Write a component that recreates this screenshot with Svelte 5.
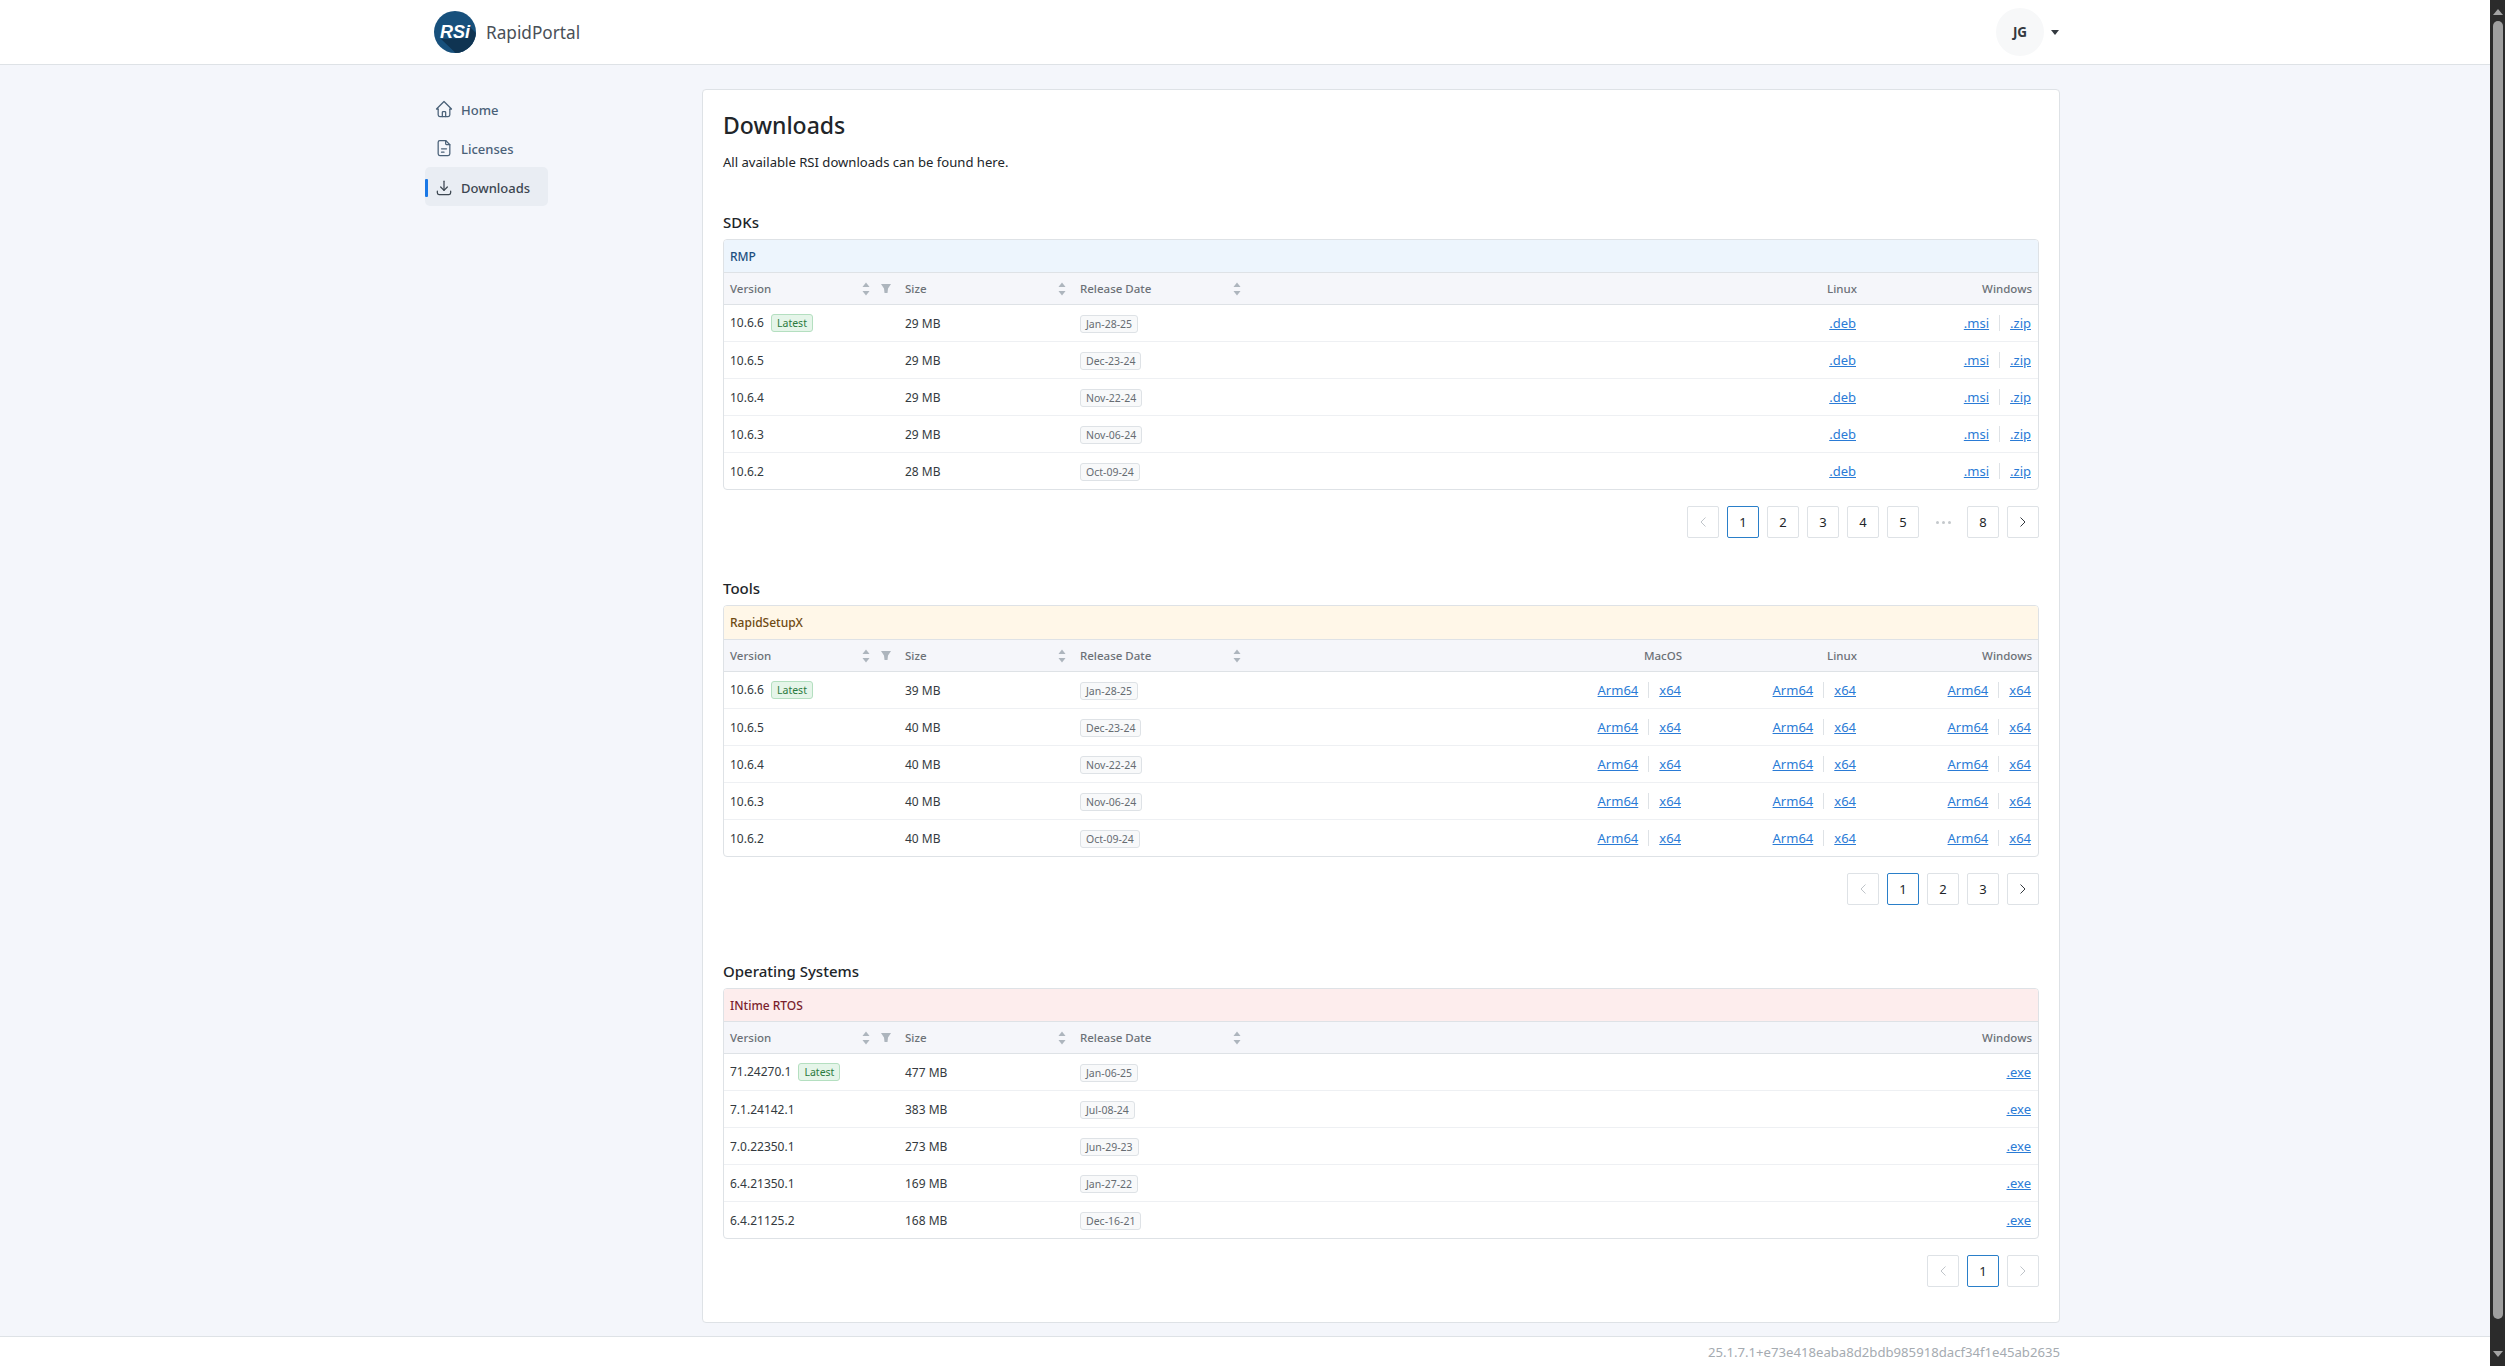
<script lang="ts">
	type Row = { version: string; size: string; date: string; latest?: boolean };
	type Section = {
		title: string;
		band: string;
		tone: string;
		platforms: string[];
		rows: Row[];
		pages: (number | string)[];
		lastDisabled?: boolean;
	};

	const sections: Section[] = [
		{
			title: 'SDKs',
			band: 'RMP',
			tone: 'blue',
			platforms: ['Linux', 'Windows'],
			rows: [
				{ version: '10.6.6', size: '29 MB', date: 'Jan-28-25', latest: true },
				{ version: '10.6.5', size: '29 MB', date: 'Dec-23-24' },
				{ version: '10.6.4', size: '29 MB', date: 'Nov-22-24' },
				{ version: '10.6.3', size: '29 MB', date: 'Nov-06-24' },
				{ version: '10.6.2', size: '28 MB', date: 'Oct-09-24' }
			],
			pages: [1, 2, 3, 4, 5, '...', 8]
		},
		{
			title: 'Tools',
			band: 'RapidSetupX',
			tone: 'yellow',
			platforms: ['MacOS', 'Linux', 'Windows'],
			rows: [
				{ version: '10.6.6', size: '39 MB', date: 'Jan-28-25', latest: true },
				{ version: '10.6.5', size: '40 MB', date: 'Dec-23-24' },
				{ version: '10.6.4', size: '40 MB', date: 'Nov-22-24' },
				{ version: '10.6.3', size: '40 MB', date: 'Nov-06-24' },
				{ version: '10.6.2', size: '40 MB', date: 'Oct-09-24' }
			],
			pages: [1, 2, 3]
		},
		{
			title: 'Operating Systems',
			band: 'INtime RTOS',
			tone: 'red',
			platforms: ['Windows'],
			rows: [
				{ version: '71.24270.1', size: '477 MB', date: 'Jan-06-25', latest: true },
				{ version: '7.1.24142.1', size: '383 MB', date: 'Jul-08-24' },
				{ version: '7.0.22350.1', size: '273 MB', date: 'Jun-29-23' },
				{ version: '6.4.21350.1', size: '169 MB', date: 'Jan-27-22' },
				{ version: '6.4.21125.2', size: '168 MB', date: 'Dec-16-21' }
			],
			pages: [1],
			lastDisabled: true
		}
	];

	function linksFor(section: Section, platform: string): string[] {
		if (section.tone === 'blue') return platform === 'Linux' ? ['.deb'] : ['.msi', '.zip'];
		if (section.tone === 'yellow') return ['Arm64', 'x64'];
		return ['.exe'];
	}
</script>

{#snippet sortIcon()}
	<svg class="sort" viewBox="0 0 8 14" width="8" height="14" aria-hidden="true">
		<path d="M4 0.5 L7.5 5 H0.5 Z" />
		<path d="M4 13.5 L7.5 9 H0.5 Z" />
	</svg>
{/snippet}

<div class="window">
	<div class="page">
		<header class="topbar">
			<div class="brand">
				<svg class="logo" viewBox="0 0 42 42" width="42" height="42" aria-hidden="true">
					<defs>
						<clipPath id="logo-clip"><circle cx="21" cy="21" r="21" /></clipPath>
					</defs>
					<circle cx="21" cy="21" r="21" fill="#17507c" />
					<path clip-path="url(#logo-clip)" d="M7 28 L34 27 L36 16 L50 30 L30 50 Z" fill="#0f3452" />
					<text x="21" y="27" text-anchor="middle" class="logo-text">RSi</text>
				</svg>
				<span class="brand-name">RapidPortal</span>
			</div>
			<div class="user">
				<span class="avatar">JG</span>
				<svg class="caret" viewBox="0 0 8 5" width="8" height="5" aria-hidden="true"><path d="M0 0 H8 L4 5 Z" /></svg>
			</div>
		</header>

		<div class="body">
			<nav class="sidebar">
				<a class="nav-item" href="#top">
					<svg class="nav-icon" viewBox="0 0 24 24" aria-hidden="true">
						<path d="M5 12H3l9-9 9 9h-2" />
						<path d="M5 12v7a2 2 0 0 0 2 2h10a2 2 0 0 0 2-2v-7" />
						<path d="M10 21v-5a1 1 0 0 1 1-1h2a1 1 0 0 1 1 1v5" />
					</svg>
					Home
				</a>
				<a class="nav-item" href="#top">
					<svg class="nav-icon" viewBox="0 0 24 24" aria-hidden="true">
						<path d="M14 3v4a1 1 0 0 0 1 1h4" />
						<path d="M17 21H7a2 2 0 0 1-2-2V5a2 2 0 0 1 2-2h7l5 5v11a2 2 0 0 1-2 2z" />
						<path d="M9 13h6" />
						<path d="M9 17h3" />
					</svg>
					Licenses
				</a>
				<a class="nav-item active" href="#top">
					<svg class="nav-icon" viewBox="0 0 24 24" aria-hidden="true">
						<path d="M4 17v2a2 2 0 0 0 2 2h12a2 2 0 0 0 2-2v-2" />
						<path d="M8 12l4 4 4-4" />
						<path d="M12 5v11" />
					</svg>
					Downloads
				</a>
			</nav>

			<main class="card">
				<h1>Downloads</h1>
				<p class="lead">All available RSI downloads can be found here.</p>

				{#each sections as section}
					<section class={section.tone}>
						<h2>{section.title}</h2>
						<div class="box">
							<div class="band">{section.band}</div>
							<table>
								<thead>
									<tr>
										<th>
											<div class="th-inner">
												<span>Version</span>
												<span class="th-icons">
													{@render sortIcon()}
													<svg class="filter" viewBox="0 0 10 9" width="10" height="9" aria-hidden="true">
														<path d="M0 0 H10 L7 4.5 L6.5 9 H3.5 L3 4.5 Z" />
													</svg>
												</span>
											</div>
										</th>
										<th>
											<div class="th-inner">
												<span>Size</span>
												{@render sortIcon()}
											</div>
										</th>
										<th>
											<div class="th-inner">
												<span>Release Date</span>
												{@render sortIcon()}
											</div>
										</th>
										<th class="spacer"></th>
										{#each section.platforms as platform}
											<th class="right">{platform}</th>
										{/each}
									</tr>
								</thead>
								<tbody>
									{#each section.rows as row}
										<tr>
											<td>
												{row.version}
												{#if row.latest}
													<span class="badge latest">Latest</span>
												{/if}
											</td>
											<td>{row.size}</td>
											<td><span class="badge date">{row.date}</span></td>
											<td class="spacer"></td>
											{#each section.platforms as platform}
												<td class="right">
													<div class="links">
														{#each linksFor(section, platform) as link, i}
															{#if i > 0}<span class="divider"></span>{/if}
															<a href="#top">{link}</a>
														{/each}
													</div>
												</td>
											{/each}
										</tr>
									{/each}
								</tbody>
							</table>
						</div>

						<div class="pager">
							<button class="page-btn" disabled aria-label="Previous">
								<svg viewBox="0 0 8 12" width="8" height="12"><path d="M6.5 1.5 L2 6 L6.5 10.5" /></svg>
							</button>
							{#each section.pages as page}
								{#if page === '...'}
									<span class="dots"><i></i><i></i><i></i></span>
								{:else}
									<button class="page-btn" class:current={page === 1}>{page}</button>
								{/if}
							{/each}
							<button class="page-btn" disabled={section.lastDisabled} aria-label="Next">
								<svg viewBox="0 0 8 12" width="8" height="12"><path d="M1.5 1.5 L6 6 L1.5 10.5" /></svg>
							</button>
						</div>
					</section>
				{/each}
			</main>
		</div>

		<footer class="footer">25.1.7.1+e73e418eaba8d2bdb985918dacf34f1e45ab2635</footer>
	</div>

	<div class="scrollbar" aria-hidden="true">
		<span class="arrow up"></span>
		<span class="thumb"></span>
		<span class="arrow down"></span>
	</div>
</div>

<style>
	:global(body) {
		margin: 0;
		background: #f4f6fb;
		overflow: hidden;
	}

	.window {
		display: flex;
		height: 1366px;
		font-family: 'Noto Sans', 'Open Sans', sans-serif;
		color: #212529;
	}

	.page {
		flex: 1;
		min-width: 0;
		display: flex;
		flex-direction: column;
	}

	.topbar {
		box-sizing: border-box;
		flex: none;
		height: 65px;
		display: flex;
		align-items: center;
		justify-content: space-between;
		padding: 0 431px 0 434px;
		background: #fff;
		border-bottom: 1px solid #dee2e6;
	}

	.brand {
		display: flex;
		align-items: center;
		gap: 10px;
	}

	.logo-text {
		font-family: 'Liberation Sans', sans-serif;
		font-weight: 700;
		font-style: italic;
		font-size: 18px;
		fill: #fff;
	}

	.brand-name {
		font-size: 17.2px;
		color: #495057;
	}

	.user {
		display: flex;
		align-items: center;
		gap: 7px;
	}

	.avatar {
		width: 48px;
		height: 48px;
		border-radius: 50%;
		background: #f7f8f9;
		display: flex;
		align-items: center;
		justify-content: center;
		font-size: 13.5px;
		font-weight: 700;
		color: #343a40;
	}

	.caret {
		fill: #343a40;
	}

	.body {
		flex: 1;
		min-height: 0;
		display: flex;
		align-items: flex-start;
		padding: 24px 430px 0 425px;
	}

	.sidebar {
		flex: none;
		width: 277px;
		display: flex;
		flex-direction: column;
	}

	.nav-item {
		box-sizing: border-box;
		width: 123px;
		height: 39px;
		display: flex;
		align-items: center;
		gap: 7px;
		padding: 3px 0 0 9px;
		border-radius: 5px;
		position: relative;
		font-size: 13px;
		font-weight: 500;
		color: #4a6178;
		text-decoration: none;
	}

	.nav-item.active {
		background: #e9edf3;
		color: #3c4650;
	}

	.nav-item.active::before {
		content: '';
		position: absolute;
		left: 0;
		top: 12px;
		width: 3px;
		height: 18px;
		border-radius: 1px;
		background: #1a78e6;
	}

	.nav-icon {
		width: 20px;
		height: 20px;
		margin-top: -3px;
		fill: none;
		stroke: currentColor;
		stroke-width: 1.5;
		stroke-linecap: round;
		stroke-linejoin: round;
	}

	.card {
		box-sizing: border-box;
		flex: 1;
		min-width: 0;
		height: 1234px;
		padding: 19px 20px 0 20px;
		background: #fff;
		border: 1px solid #dee2e6;
		border-radius: 4px;
	}

	h1 {
		margin: 0;
		font-size: 23px;
		line-height: 32px;
		font-weight: 500;
		color: #212529;
	}

	.lead {
		margin: 10px 0 0;
		font-size: 13.1px;
		line-height: 22px;
	}

	section {
		margin-top: 38px;
	}

	section.blue {
		margin-top: 37px;
	}

	section.red {
		margin-top: 54px;
	}

	h2 {
		margin: 0 0 5px;
		font-size: 15px;
		line-height: 24px;
		font-weight: 500;
	}

	.box {
		border: 1px solid #dee2e6;
		border-radius: 4px;
		overflow: hidden;
	}

	.band {
		box-sizing: border-box;
		height: 33px;
		padding: 0 6px;
		display: flex;
		align-items: center;
		font-size: 12px;
		font-weight: 500;
		border-bottom: 1px solid #dee2e6;
	}

	.blue .band {
		background: #edf5fd;
		color: #1c4f80;
	}

	.yellow .band {
		height: 34px;
		background: #fff7e8;
		color: #6e4a12;
	}

	.red .band {
		background: #fdeded;
		color: #7a1f2e;
	}

	table {
		width: 100%;
		table-layout: fixed;
		border-collapse: separate;
		border-spacing: 0;
	}

	th {
		box-sizing: border-box;
		width: 175px;
		height: 32px;
		padding: 0 6px;
		background: #f5f6fa;
		border-bottom: 1px solid #dee2e6;
		font-size: 11.5px;
		font-weight: 500;
		color: #6c7177;
		text-align: left;
	}

	th.spacer,
	td.spacer {
		width: auto;
	}

	.th-inner {
		display: flex;
		align-items: center;
		justify-content: space-between;
		padding-right: 2px;
	}

	.th-icons {
		display: flex;
		align-items: center;
		gap: 11px;
	}

	.sort,
	.filter {
		fill: #adb5bd;
	}

	td {
		box-sizing: border-box;
		height: 37px;
		padding: 0 6px;
		border-bottom: 1px solid #eef0f3;
		font-size: 12px;
		color: #343a40;
		white-space: nowrap;
	}

	tbody tr:last-child td {
		height: 36px;
		border-bottom: none;
	}

	th.right {
		text-align: right;
	}

	td.right {
		padding-right: 7px;
	}

	.badge {
		display: inline-block;
		box-sizing: border-box;
		height: 18px;
		line-height: 16px;
		padding: 0 5px;
		border: 1px solid;
		border-radius: 3px;
		font-size: 10.5px;
		vertical-align: middle;
	}

	.badge.latest {
		margin-left: 4px;
		background: #e5f5e9;
		border-color: #b4dfc0;
		color: #2b7a3e;
	}

	.badge.date {
		margin-top: 1px;
		background: #f8f9fa;
		border-color: #dee2e6;
		color: #666c72;
	}

	.links {
		display: flex;
		justify-content: flex-end;
		align-items: center;
		gap: 10px;
	}

	.links a {
		font-size: 13px;
		color: #2a7bd6;
		text-decoration: underline;
	}

	.divider {
		width: 1px;
		height: 16px;
		background: #dee2e6;
	}

	.pager {
		display: flex;
		justify-content: flex-end;
		gap: 8px;
		margin-top: 16px;
	}

	.page-btn {
		box-sizing: border-box;
		width: 32px;
		height: 32px;
		padding: 0;
		display: flex;
		align-items: center;
		justify-content: center;
		background: #fff;
		border: 1px solid #dee2e6;
		border-radius: 2px;
		font-family: inherit;
		font-size: 13px;
		color: #212529;
	}

	.page-btn svg {
		fill: none;
		stroke: #343a40;
		stroke-width: 1;
	}

	.page-btn:disabled svg {
		stroke: #bfc4c9;
	}

	.page-btn.current {
		border-color: #2a7fc9;
	}

	.dots {
		width: 32px;
		height: 32px;
		display: flex;
		align-items: center;
		justify-content: center;
		gap: 3px;
	}

	.dots i {
		width: 3px;
		height: 3px;
		border-radius: 50%;
		background: #c4c8cc;
	}

	.footer {
		box-sizing: border-box;
		flex: none;
		height: 30px;
		padding: 0 430px 0 0;
		display: flex;
		align-items: center;
		justify-content: flex-end;
		background: #fff;
		border-top: 1px solid #dee2e6;
		font-size: 13.15px;
		color: #a5abb1;
	}

	.scrollbar {
		flex: none;
		width: 15px;
		background: #2b2b2b;
		display: flex;
		flex-direction: column;
		align-items: center;
	}

	.thumb {
		width: 10px;
		flex: 1;
		margin: 6px 0 32px;
		border-radius: 5px;
		background: #9f9f9f;
	}

	.arrow {
		width: 0;
		height: 0;
		margin-top: 9px;
		border-left: 5px solid transparent;
		border-right: 5px solid transparent;
	}

	.arrow.up {
		border-bottom: 6px solid #a3a3a3;
	}

	.arrow.down {
		margin-top: 0;
		margin-bottom: 9px;
		border-top: 6px solid #a3a3a3;
	}
</style>
